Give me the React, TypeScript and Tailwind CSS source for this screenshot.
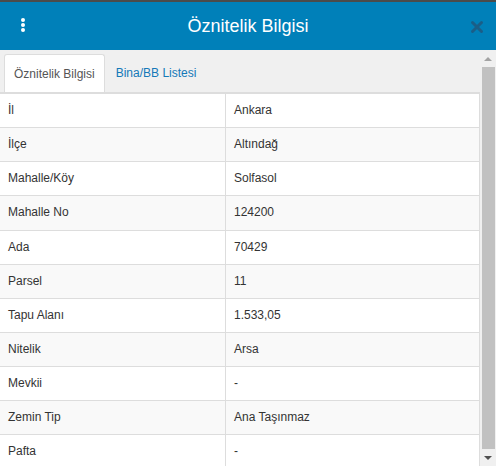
import { X } from "lucide-react";

const rows: [string, string][] = [
  ["İl", "Ankara"],
  ["İlçe", "Altındağ"],
  ["Mahalle/Köy", "Solfasol"],
  ["Mahalle No", "124200"],
  ["Ada", "70429"],
  ["Parsel", "11"],
  ["Tapu Alanı", "1.533,05"],
  ["Nitelik", "Arsa"],
  ["Mevkii", "-"],
  ["Zemin Tip", "Ana Taşınmaz"],
  ["Pafta", "-"],
];

const App = () => {
  return (
    <div
      className="w-[496px] h-[466px] overflow-hidden flex flex-col bg-[#f0f0f0] text-[#333]"
      style={{ fontFamily: '"Liberation Sans", Arial, sans-serif' }}
    >
      <div className="h-[2px] bg-[#4b4b4b]" />
      <div className="relative h-[48px] bg-[#0080b9] flex items-center justify-center">
        <div className="absolute left-[21px] top-[16px] flex flex-col gap-[1px]">
          <span className="w-[4px] h-[4px] rounded-full bg-white" />
          <span className="w-[4px] h-[4px] rounded-full bg-white" />
          <span className="w-[4px] h-[4px] rounded-full bg-white" />
        </div>
        <h1 className="text-[18px] text-white leading-none">Öznitelik Bilgisi</h1>
        <X className="absolute right-[10px] top-[16px] h-[18px] w-[18px] text-[#1a5e88]" strokeWidth={4} />
      </div>
      <div className="flex flex-1 min-h-0">
        <div className="w-[480px] pt-[4px] flex flex-col">
          <div className="flex pl-[4px] border-b border-[#ddd]">
            <div className="h-[38px] px-[9px] flex items-center bg-white border border-b-0 border-[#ddd] rounded-t-[3px] text-[12px] text-[#555] -mb-px">
              Öznitelik Bilgisi
            </div>
            <div className="h-[38px] px-[11px] flex items-center text-[12px] text-[#1479b8]">
              Bina/BB Listesi
            </div>
          </div>
          <div className="bg-white border-r border-[#ddd]">
            {rows.map(([k, v], i) => (
              <div
                key={k}
                className={`flex border-t border-[#ddd] text-[12px] leading-[1.42857] ${i % 2 === 1 ? "bg-[#f9f9f9]" : "bg-white"}`}
              >
                <div className="w-[226px] shrink-0 py-2 px-2 border-r border-[#ddd]">{k}</div>
                <div className="flex-1 py-2 px-2">{v}</div>
              </div>
            ))}
          </div>
        </div>
        <div className="w-[16px] flex flex-col items-center bg-[#f0f0f0]">
          <div className="h-[17px] flex items-center justify-center">
            <div className="w-0 h-0 border-x-[4px] border-x-transparent border-b-[4px] border-b-[#a3a3a3]" />
          </div>
          <div className="w-[13px] ml-[1px] flex-1 bg-[#c1c1c1]" />
          <div className="h-[17px] flex items-center justify-center">
            <div className="w-0 h-0 border-x-[4px] border-x-transparent border-t-[4px] border-t-[#505050]" />
          </div>
        </div>
      </div>
    </div>
  );
};

export default App;
